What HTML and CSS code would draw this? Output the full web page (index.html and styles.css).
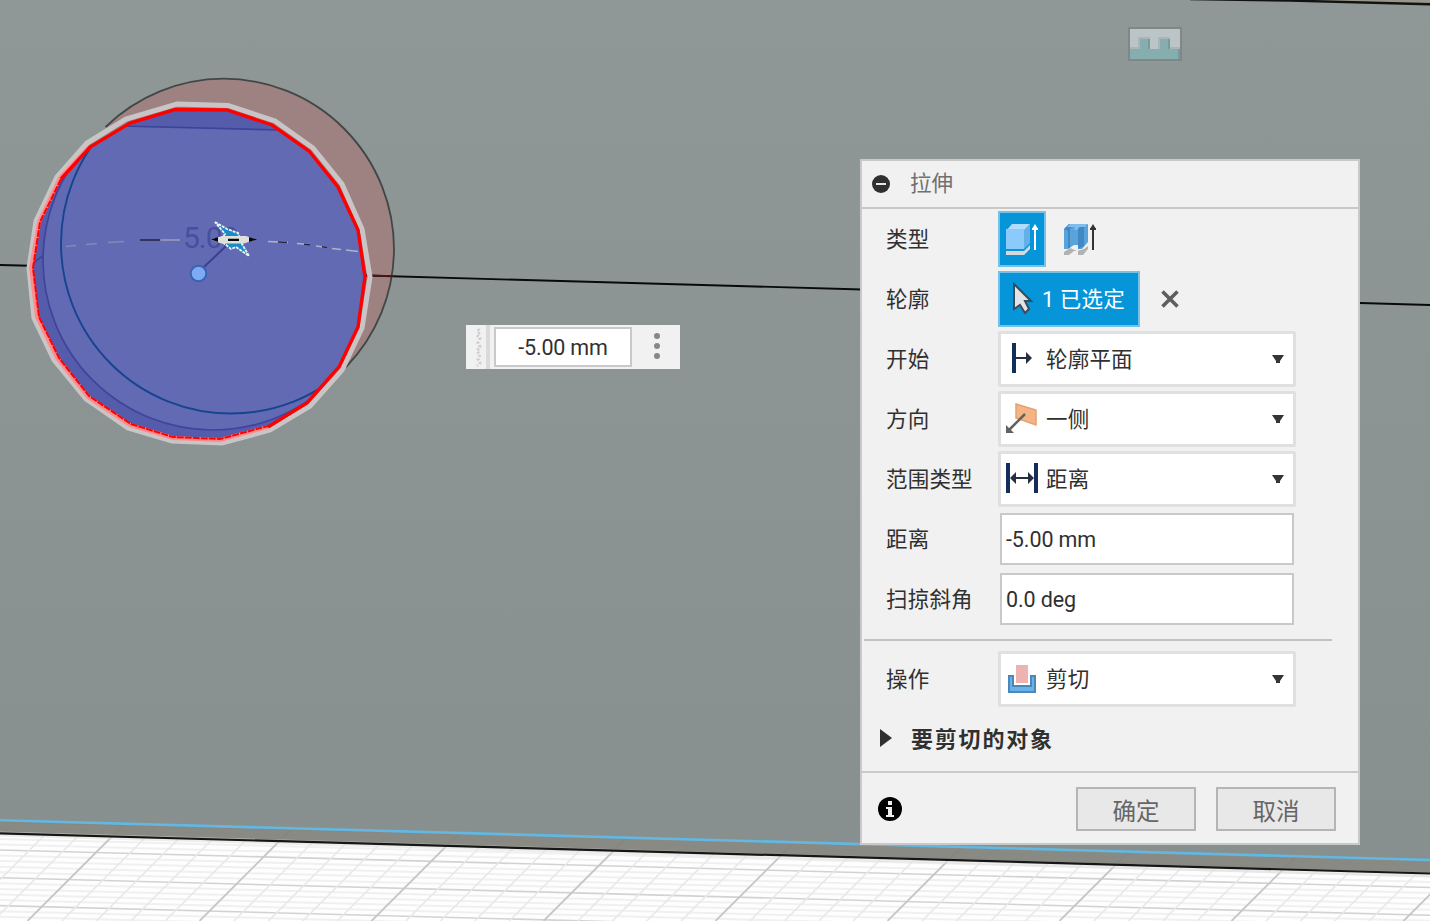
FILE: index.html
```html
<!DOCTYPE html>
<html lang="zh-CN">
<head>
<meta charset="utf-8">
<title>拉伸</title>
<link rel="stylesheet" href="styles.css">
</head>
<body>
<main class="viewport">
<svg class="scene" width="1430" height="921" viewBox="0 0 1430 921">
  <defs>
    <linearGradient id="face" x1="0" y1="0" x2="0" y2="1"><stop offset="0" stop-color="#8f9896"/><stop offset="1" stop-color="#87908e"/></linearGradient>
    <clipPath id="profile"><path d="M175 109L227 110L272 125L309 151L338 187L358 230L366 277L358 327L339 367L307 403L268 427L220 440L173 438L130 425L88 397L57 358L37 317L31 268L39 222L60 178L90 146L130 123Z"/></clipPath>
  </defs>
  <rect width="1430" height="921" fill="#fefefe"/>
  <g id="grid" fill="none"></g>
  <path d="M0 820L1430 860V874L0 833Z" fill="#81817b" fill-opacity=".93"/>
  <path d="M0 834L1430 875" stroke="#ddd" stroke-width="5" opacity=".5"/>
  <path d="M0 833.3L1430 873.5" stroke="#161616" stroke-width="2.2"/>
  <path d="M0 0H1430V860L0 820Z" fill="url(#face)"/>
  <path d="M0 820.2L1430 860" stroke="#62b8e2" stroke-width="2.6"/>
  <path d="M1300 0H1430V3Z" fill="#99968a"/>
  <path d="M1190 -1L1290 .6L1430 4.2" stroke="#10130f" stroke-width="2.4" fill="none"/>
  <path d="M105.500 127A170.500 170.500 0 0 1 223.500 78.700A170.500 170.500 0 0 1 394 249.500A170.500 170.500 0 0 1 346 367L200 270Z" fill="#9e8281"/>
  <path d="M105.500 127A170.500 170.500 0 0 1 223.500 78.700A170.500 170.500 0 0 1 394 249.500A170.500 170.500 0 0 1 346 367" fill="none" stroke="#414746" stroke-width="1.8"/>
  <path d="M0 265L40 266M366 275.5L862 289.5M1360 303L1430 305" stroke="#080a0a" stroke-width="1.8"/>
  <path d="M366 275.5L394 276.2" stroke="#51151b" stroke-width="1.8"/>
  <path d="M175 109L227 110L272 125L309 151L338 187L358 230L366 277L358 327L339 367L307 403L268 427L220 440L173 438L130 425L88 397L57 358L37 317L31 268L39 222L60 178L90 146L130 123Z" fill="#555cab"/>
  <g clip-path="url(#profile)" fill="none">
    <circle cx="213" cy="260" r="170" fill="#636ab4" stroke="#40449a" stroke-width="1.7"/>
    <path d="M110 100H300V130L110 126Z" fill="#555cab"/>
    <path d="M120 126L280 130M32 264L37 260L43 256" stroke="#3e4398" stroke-width="1.7"/>
    <circle cx="231" cy="243.500" r="170" stroke="#16448f" stroke-width="1.9"/>
  </g>
  <path d="M177 104L228 105.500L275 121L313 148L342 184L362 229L370 277L362 328L342 370L310 406L270 430L222 443L172 441L128 428L86 399L54 360L34 318L29 268L36 221L57 177L87 143L126 119Z" fill="none" stroke="#c9c5c7" stroke-width="5"/>
  <path d="M130 425L173 438L220 440L268 427M130 425L88 397L57 358L37 317L31 268L39 222L60 178L90 146" fill="none" stroke="#ff8b8b" stroke-width="4"/>
  <path d="M61 179L90 147L130 123L175 109.500L227 110L272 125L309 151L338 187L358 230L365 277L358 327L339 367L307 403L268 427" fill="none" stroke="#f00" stroke-width="3.4"/>
  <path d="M61 179L40 222L33 268L39 317L59 358L89 396L131 424L173 437L220 439L268 426" fill="none" stroke="#f00" stroke-width="2" stroke-dasharray="7 1"/>
  <path d="M66 246.500L76 245.500M86 244.500L97 243.500M108 242.500L124 241.500" stroke="#8587b5" stroke-width="1.4"/>
  <path d="M140 240H162" stroke="#25274a" stroke-width="1.6"/><path d="M160 240H180" stroke="#9b9cbc" stroke-width="1.6"/>
  <path d="M268 241.500L288 242.500M297 243.500L310 244.500M316 246L327 247.500M332 248.500L341 249.500M346 250L358 251.500" stroke="#b0b1cb" stroke-width="1.4"/>
  <path d="M278 242L287 242.500M304 244.200L310 244.700M322 246.800L327 247.500" stroke="#25274a" stroke-width="1.6"/>
  <text class="ghost-value" x="183" y="248">5.00</text>
  <path d="M204 267L226 246" stroke="#393f93" stroke-width="2"/>
  <circle cx="198.500" cy="273.500" r="7.800" fill="#7caaf4" stroke="#3a62b0" stroke-width="2"/>
  <path d="M215 222L227 229L238 233L242 244L249 256L236 247L231 249L220 240L225 234Z" fill="#168dca" stroke="#edf6f5" stroke-width="1.8" stroke-dasharray="3 1"/>
  <path d="M211 239.500L222 236H246L256 239.500L244 243.500H221Z" fill="#dfdfdb"/>
  <path d="M211 239.500L218 237V242ZM257 239.500L249 237V242ZM228 238.700H239V241H228Z" fill="#080808"/>
  <g shape-rendering="crispEdges">
    <path d="M1128 27H1182V61H1128Z" fill="#7f8887"/><path d="M1130 29H1180V59H1130Z" fill="#bbc5c7"/>
    <path d="M1138 37H1150V49H1158V37H1170V47H1180V59H1130V47H1138Z" fill="#a8b6b7"/>
    <path d="M1140 39H1150V49H1160V39H1170V49H1180V59H1130V49H1140Z" fill="#87aeaf"/>
    <path d="M1148 39H1150V49H1148ZM1168 39H1170V49H1168ZM1178 49H1180V59H1178Z" fill="#769b9c"/>
  </g>
</svg>

<div class="value-box">
  <svg class="grip" width="20" height="44" viewBox="0 0 20 44"><path d="M12 4L14 7L11 10L14 13L12 18L14 22L11 26L14 30L12 34L14 38L11 41" fill="none" stroke="#cdcdcd" stroke-width="3" stroke-dasharray="2 2"/></svg>
  <span class="grip-bar"></span>
  <span class="value-input">-5.00 mm</span>
  <svg class="more" width="48" height="44" viewBox="0 0 48 44" fill="#878787"><circle cx="25" cy="11" r="3"/><circle cx="25" cy="21" r="3"/><circle cx="25" cy="31" r="3"/></svg>
</div>

<section class="panel">
  <header class="panel-head">
    <svg width="18" height="18" viewBox="0 0 18 18"><circle cx="9" cy="9" r="9" fill="#303030"/><path d="M4 9H14" stroke="#e8e8e8" stroke-width="2"/></svg>
    <span>拉伸</span>
  </header>
  <div class="row"><span class="label">类型</span>
    <span class="type on"><svg width="36" height="36" viewBox="0 0 36 36"><path d="M2 28H20L26 22V26L20 32H2Z" fill="#d5d9db"/><path d="M2 8L8 1H26L20 8Z" fill="#b0dcff"/><path d="M2 6H20V26H2Z" fill="#8bcbfb"/><path d="M20 7L26 1V20L20 26Z" fill="#64b0e6"/><path d="M31 27V4M28 6H34" stroke="#fff" stroke-width="2"/><path d="M31 1L34 6H28Z" fill="#fff"/></svg></span>
    <span class="type"><svg width="36" height="36" viewBox="0 0 36 36"><path d="M2 29L8 25L15 28L22 26L26 23V26L21 32H16V28H12L7 32H2Z" fill="#b2b2b2"/><path d="M2 6L7 1H26V19L20 26H16V22H12L6 26H2Z" fill="#5aa3da"/><path d="M2 6L7 1H13L8 6V25H6V8ZM16 6L21 1H26L22 5V23L16 26Z" fill="#4089c5"/><path d="M8 1H26L23 4H17L15 7H12L13 4H5Z" fill="#80bdec"/><path d="M31 27V4M28 6H34" stroke="#333" stroke-width="2"/><path d="M31 1L34 6H28Z" fill="#333"/></svg></span>
  </div>
  <div class="row"><span class="label">轮廓</span>
    <span class="selected"><svg width="24" height="36" viewBox="0 0 24 36"><path d="M4 3L21 20H15L19 28L15 32L10 24L4 28Z" fill="#e1e4e7" stroke="#3b4a57" stroke-width="2"/></svg><span>1 已选定</span></span>
    <svg class="clear" width="20" height="20" viewBox="0 0 20 20"><path d="M2.500 2.500L17.500 17.500M17.500 2.500L2.500 17.500" stroke="#5e5e5e" stroke-width="3.600"/></svg>
  </div>
  <div class="row"><span class="label">开始</span>
    <div class="select"><svg class="icon" width="36" height="36" viewBox="0 0 36 36"><path d="M8 2H12V32H8Z" fill="#152d5b"/><path d="M12 17H26" stroke="#252f40" stroke-width="2"/><path d="M22 11L28 17L22 23Z" fill="#252f40"/></svg><span>轮廓平面</span><svg class="caret" width="12" height="8" viewBox="0 0 12 8"><path d="M0 0H12L8 6V8H4V6Z"/></svg></div></div>
  <div class="row"><span class="label">方向</span>
    <div class="select"><svg class="icon" width="36" height="36" viewBox="0 0 36 36"><path d="M12 3L32 9V24L12 17Z" fill="#f5b485" stroke="#e3a273" stroke-width="1.500"/><path d="M21 13L5 29" stroke="#626262" stroke-width="2.500"/><path d="M2 24V32H10Z" fill="#626262"/></svg><span>一侧</span><svg class="caret" width="12" height="8" viewBox="0 0 12 8"><path d="M0 0H12L8 6V8H4V6Z"/></svg></div></div>
  <div class="row"><span class="label">范围类型</span>
    <div class="select"><svg class="icon" width="36" height="36" viewBox="0 0 36 36"><path d="M2 2H6V32H2ZM30 2H34V32H30Z" fill="#152d5b"/><path d="M8 17H28" stroke="#252f40" stroke-width="2"/><path d="M12 11L6 17L12 23ZM24 11L30 17L24 23Z" fill="#252f40"/></svg><span>距离</span><svg class="caret" width="12" height="8" viewBox="0 0 12 8"><path d="M0 0H12L8 6V8H4V6Z"/></svg></div></div>
  <div class="row"><span class="label">距离</span><div class="field">-5.00 mm</div></div>
  <div class="row"><span class="label">扫掠斜角</span><div class="field">0.0 deg</div></div>
  <div class="rule"></div>
  <div class="row"><span class="label">操作</span>
    <div class="select"><svg class="icon" width="36" height="36" viewBox="0 0 36 36"><path d="M5 15H9V25H27V15H31V31H5Z" fill="#69b1e6" stroke="#4a88b9" stroke-width="2"/><path d="M10 4H26V24H10Z" fill="#fff"/><path d="M12 4H24V22H12Z" fill="#edb3b3"/></svg><span>剪切</span><svg class="caret" width="12" height="8" viewBox="0 0 12 8"><path d="M0 0H12L8 6V8H4V6Z"/></svg></div></div>
  <div class="objects"><svg width="12" height="20" viewBox="0 0 12 20"><path d="M0 0V18L12 9Z" fill="#303030"/></svg><span>要剪切的对象</span></div>
  <footer class="panel-foot">
    <svg class="info" width="24" height="24" viewBox="0 0 24 24"><circle cx="12" cy="12" r="12"/><path d="M10 4H14V8H10ZM8 10H14V18H16V20H8V18H10V12H8Z" fill="#eee"/></svg>
    <button class="btn">确定</button><button class="btn">取消</button>
  </footer>
</section>
</main>
<script src="script.js"></script>
</body>
</html>
```
FILE: styles.css
```css
* { box-sizing: border-box; }
body { margin: 0; overflow: hidden; font-family: Roboto, "Noto Sans CJK SC", sans-serif; font-size: 21.5px; line-height: 28px; color: #303030; }
.viewport { position: relative; width: 1430px; height: 921px; overflow: hidden; }
.scene { display: block; }
.ghost-value { font-size: 30px; font-weight: 400; fill: #484f9f; letter-spacing: -1px; }

.value-box { position: absolute; left: 466px; top: 325px; width: 214px; height: 44px; display: flex; align-items: center; background: #f1f1f1; }
.grip-bar { width: 4px; height: 44px; background: #dadada; margin-right: 4px; }
.value-input { width: 138px; height: 40px; border: 2px solid #c9c9c9; background: #fff; text-align: center; line-height: 37px; letter-spacing: -.2px; }

.panel { position: absolute; left: 860px; top: 159px; width: 500px; height: 686px; border: 2px solid #c9c9c9; background: #f1f1f1; }
.panel-head { height: 48px; padding-left: 10px; display: flex; align-items: center; gap: 20px; border-bottom: 2px solid #c9c9c9; color: #707070; }
.row { height: 60px; padding-left: 24px; display: flex; align-items: center; }
.label { width: 112px; flex: none; }
.label, .select span, .selected span { padding-top: 1px; letter-spacing: .2px; }
.type { width: 48px; height: 56px; padding: 3px 0 0 4px; margin-right: 10px; display: flex; align-items: center; border: 2px solid transparent; }
.type.on { background: #0795d9; border-color: #77c1e6; }
.selected { width: 142px; height: 56px; padding-left: 10px; display: flex; align-items: center; gap: 8px; white-space: nowrap; background: #0795d9; border: 2px solid #77c1e6; color: #fff; }
.clear { margin-left: 20px; }
.select { width: 298px; height: 56px; padding: 0 9px 0 3px; display: flex; align-items: center; border: 3px solid #e0e0e0; border-radius: 2px; background: #fff; }
.select .icon { margin-right: 6px; }
.caret { margin-left: auto; fill: #353535; }
.field { width: 294px; height: 52px; margin-left: 2px; padding-left: 4px; border: 2px solid #c9c9c9; background: #fff; line-height: 49px; letter-spacing: -.1px; }
.rule { width: 468px; height: 2px; margin: 10px 0 8px 2px; background: #c1c1c1; }
.objects { height: 60px; padding-left: 18px; display: flex; align-items: center; gap: 19px; font-weight: 700; font-size: 22px; letter-spacing: 1.8px; }
.objects span { padding-top: 1px; }
.panel-foot { height: 74px; margin-top: 2px; padding: 0 22px 0 16px; display: flex; align-items: center; gap: 20px; border-top: 2px solid #c9c9c9; }
.info { margin-right: auto; }
.btn { width: 120px; height: 44px; padding: 5px 0 0; border: 2px solid #b5b5b5; border-radius: 0; background: #e8e8e8; color: #666; font: inherit; font-size: 23.5px; }
```
FILE: script.js
```
// Perspective floor grid: one slanted family, one nearly horizontal family.
const grid = document.getElementById('grid');
function line(x1, y1, x2, y2, color, width) {
  const p = document.createElementNS('http://www.w3.org/2000/svg', 'path');
  p.setAttribute('d', `M${x1} ${y1}L${x2} ${y2}`);
  p.setAttribute('stroke', color);
  p.setAttribute('stroke-width', width);
  grid.appendChild(p);
}
for (let i = -10; i < 25; i++) {
  const y = 850 + i * 5.56;
  line(0, y, 1430, y + 37.5, i % 5 === 0 ? '#d2d2d2' : '#f0f0f0', i % 5 === 0 ? 1.6 : 2);
}
for (let i = -2; i < 48; i++) {
  const x = 27.5 + i * 34.4;
  line(x, 921, x + 110, 811, i % 5 === 0 ? '#c6c6c6' : '#e8e8e8', i % 5 === 0 ? 1.8 : 1.6);
}
```
